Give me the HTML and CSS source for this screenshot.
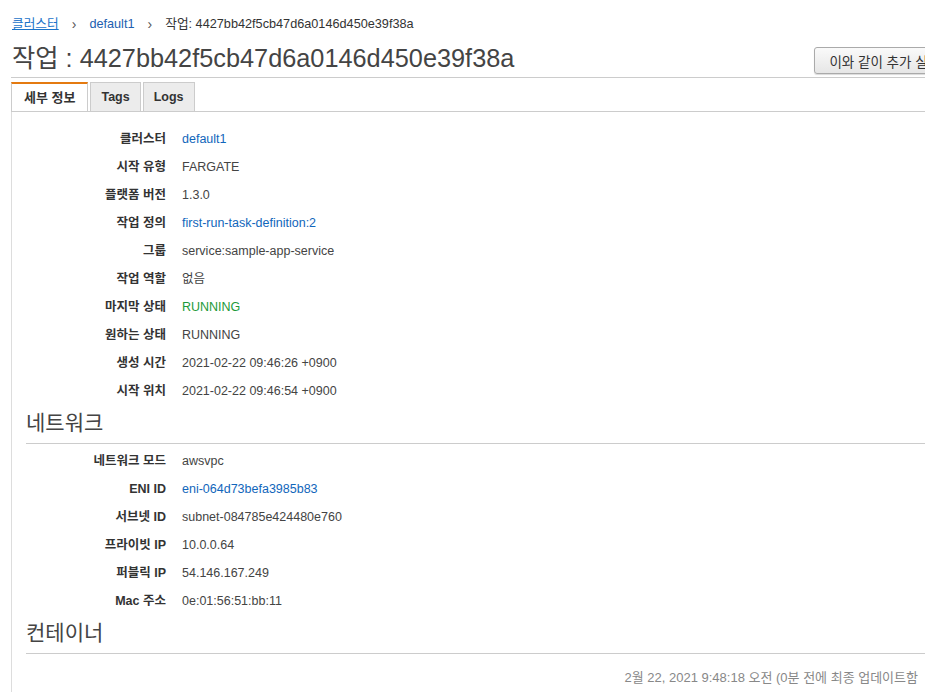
FILE: index.html
```html
<!DOCTYPE html>
<html lang="ko">
<head>
    <meta charset="UTF-8">
    <meta name="viewport" content="width=device-width, initial-scale=1.0">
    <title>작업 : 4427bb42f5cb47d6a0146d450e39f38a</title>
    <link rel="stylesheet" href="styles.css">
</head>
<body>
    <div class="page">
        <div class="breadcrumb">
            <a class="crumb-link" href="#">클러스터</a>
            <span class="sep">&#x203A;</span>
            <a class="crumb-item" href="#">default1</a>
            <span class="sep">&#x203A;</span>
            <span class="crumb-current">작업: 4427bb42f5cb47d6a0146d450e39f38a</span>
        </div>
        <div class="title-row">
            <h1 class="title">작업 : 4427bb42f5cb47d6a0146d450e39f38a</h1>
            <button class="btn">이와 같이 추가 실행</button>
        </div>
        <div class="tabs">
            <div class="tab active">세부 정보</div>
            <div class="tab">Tags</div>
            <div class="tab">Logs</div>
        </div>
        <div class="panel">
            <div class="details first">
                <div class="row"><div class="label">클러스터</div><div class="value"><a class="link" href="#">default1</a></div></div>
                <div class="row"><div class="label">시작 유형</div><div class="value">FARGATE</div></div>
                <div class="row"><div class="label">플랫폼 버전</div><div class="value">1.3.0</div></div>
                <div class="row"><div class="label">작업 정의</div><div class="value"><a class="link" href="#">first-run-task-definition:2</a></div></div>
                <div class="row"><div class="label">그룹</div><div class="value">service:sample-app-service</div></div>
                <div class="row"><div class="label">작업 역할</div><div class="value">없음</div></div>
                <div class="row"><div class="label">마지막 상태</div><div class="value running">RUNNING</div></div>
                <div class="row"><div class="label">원하는 상태</div><div class="value">RUNNING</div></div>
                <div class="row"><div class="label">생성 시간</div><div class="value">2021-02-22 09:46:26 +0900</div></div>
                <div class="row"><div class="label">시작 위치</div><div class="value">2021-02-22 09:46:54 +0900</div></div>
            </div>

            <h2 class="section">네트워크</h2>
            <div class="details">
                <div class="row"><div class="label">네트워크 모드</div><div class="value">awsvpc</div></div>
                <div class="row"><div class="label">ENI ID</div><div class="value"><a class="link" href="#">eni-064d73befa3985b83</a></div></div>
                <div class="row"><div class="label">서브넷 ID</div><div class="value">subnet-084785e424480e760</div></div>
                <div class="row"><div class="label">프라이빗 IP</div><div class="value">10.0.0.64</div></div>
                <div class="row"><div class="label">퍼블릭 IP</div><div class="value">54.146.167.249</div></div>
                <div class="row"><div class="label">Mac 주소</div><div class="value">0e:01:56:51:bb:11</div></div>
            </div>

            <h2 class="section">컨테이너</h2>
            <div class="footer">2월 22, 2021 9:48:18 오전 (0분 전에 최종 업데이트함</div>
        </div>
    </div>
</body>
</html>
```

FILE: styles.css
```css
html, body{
    margin: 0;
    overflow: hidden;
    background-color: #fff;
}
body{
    font-family: "Liberation Sans", Arial, "Noto Sans CJK KR", sans-serif;
    font-size: 12.5px;
    color: #444;
}
.page{
    width: 944px;
    margin-left: 11px;
}
.breadcrumb{
    display: flex;
    align-items: center;
    padding: 16px 0 0 1px;
    height: 16px;
    line-height: 16px;
    font-size: 12.7px;
}
.crumb-link{
    color: #1a73c9;
    text-decoration: underline;
}
.crumb-item{
    color: #2160b0;
    text-decoration: none;
}
.sep{
    color: #555;
    font-size: 14px;
    margin: 0 13px 0 13px;
}
.crumb-current{
    color: #333;
}
.title-row{
    display: flex;
    justify-content: space-between;
    align-items: flex-end;
    margin-top: 12px;
    padding: 0 0 4px 1px;
    border-bottom: 1px solid #ccc;
}
.title{
    margin: 0;
    font-size: 25.3px;
    font-weight: normal;
    line-height: 29px;
    color: #444;
}
.btn{
    height: 27px;
    padding: 0 14px;
    font-family: "Liberation Sans", Arial, "Noto Sans CJK KR", sans-serif;
    font-size: 13.5px;
    color: #333;
    background: linear-gradient(#fafafa, #e6e6e6);
    border: 1px solid #aaa;
    border-radius: 3px;
    box-shadow: 0 1px 1px rgba(0,0,0,.15);
    margin-bottom: -1px;
}
.tabs{
    display: flex;
    padding-top: 4px;
    border-bottom: 1px solid #ccc;
}
.tab{
    height: 28px;
    line-height: 28px;
    padding: 0 10px;
    margin-right: 2px;
    font-size: 12.5px;
    font-weight: bold;
    color: #333;
    background-color: #ececec;
    border: 1px solid #ccc;
    border-bottom: none;
}
.tab.active{
    height: 27px;
    padding: 0 12px;
    font-size: 13px;
    background-color: #fff;
    border-top: 2px solid #e47a10;
}
.panel{
    border-left: 1px solid #ddd;
    padding-bottom: 20px;
}
.details{
    padding-top: 3px;
}
.details.first{
    padding-top: 13px;
}
.row{
    display: flex;
    height: 28px;
    line-height: 28px;
}
.label{
    width: 154px;
    text-align: right;
    font-weight: bold;
    color: #333;
}
.value{
    margin-left: 16px;
    color: #444;
}
.link{
    color: #1166bb;
    text-decoration: none;
}
.running{
    color: #1d9a3a;
}
.section{
    margin: 0 0 0 14px;
    padding: 4px 0 6px;
    line-height: 28px;
    font-size: 21px;
    font-weight: normal;
    color: #444;
    border-bottom: 1px solid #ccc;
}
.footer{
    width: 906px;
    padding-top: 16px;
    line-height: 16px;
    text-align: right;
    font-size: 13px;
    color: #888;
}
```
